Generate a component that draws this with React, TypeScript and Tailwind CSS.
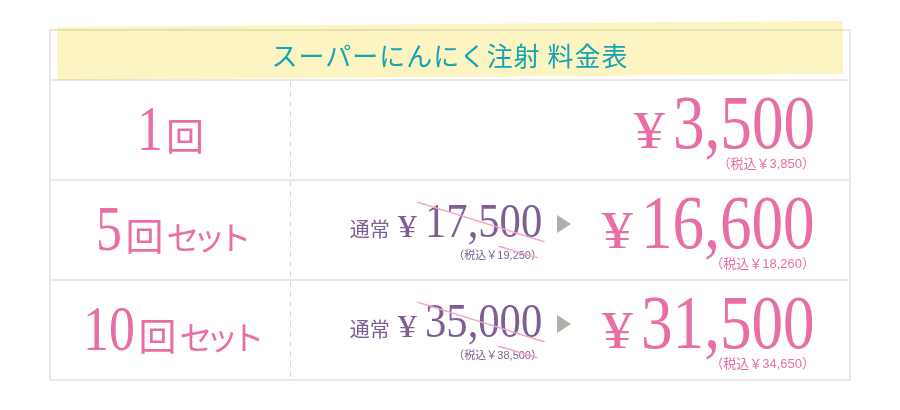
import React from "react";

const serif = "font-['Liberation_Serif','Noto_Sans_CJK_JP',serif]";
const sans = "font-['Noto_Sans_CJK_JP','Liberation_Sans',sans-serif]";
const small = "font-['Liberation_Sans','Noto_Sans_CJK_JP',sans-serif]";

function Strike({ className, w, h }: { className: string; w: number; h: number }) {
  return (
    <svg className={`pointer-events-none absolute ${className}`} width={w} height={h} viewBox={`0 0 ${w} ${h}`}>
      <line x1="0" y1="0" x2={w} y2={h} stroke="#f2a5c6" strokeWidth="1.5" />
    </svg>
  );
}

function Label({ num, squeeze, set }: { num: string; squeeze: string; set?: boolean }) {
  return (
    <div className="flex flex-1 items-baseline justify-center pt-[16px] text-[#e96ea5]">
      <span className={`inline-block origin-left scale-x-[0.81] text-[64px] leading-none ${serif} ${squeeze}`}>
        {num}
      </span>
      <span className={`ml-[3px] text-[38px] leading-none ${sans}`}>回</span>
      {set && <span className={`ml-[3px] text-[33px] leading-none tracking-[-7px] ${sans}`}>セット</span>}
    </div>
  );
}

function BigPrice({ amount, tax, squeeze }: { amount: string; tax: string; squeeze: string }) {
  return (
    <div className="flex w-[244px] flex-col items-end pt-[9px]">
      <div className={`flex items-baseline text-[#e96ea5] ${serif}`}>
        <span className="mr-[8px] inline-block origin-right scale-x-[1.2] text-[52px] leading-[40px]">¥</span>
        <span className={`inline-block origin-left scale-x-[0.82] text-[77px] leading-[65px] ${squeeze}`}>{amount}</span>
      </div>
      <div className={`mt-[2px] text-[13px] leading-[13px] text-[#e96ea5] ${small}`}>（税込￥{tax}）</div>
    </div>
  );
}

function Regular({ amount, tax }: { amount: string; tax: string }) {
  return (
    <div className="flex flex-col items-end pt-[18px] text-[#7d5f96]">
      <div className="relative flex items-baseline">
        <span className={`text-[20px] leading-none ${sans}`}>通常</span>
        <span className={`ml-[11px] mr-[8px] inline-block origin-right scale-x-[1.2] text-[32px] leading-[26px] ${serif}`}>
          ¥
        </span>
        <span className={`inline-block origin-left scale-x-[0.87] text-[49px] leading-[43px] -mr-[17.5px] ${serif}`}>
          {amount}
        </span>
        <Strike className="-right-[3px] top-[3px]" w={128} h={40} />
      </div>
      <div className={`relative mt-[8px] text-[11px] leading-[11px] ${small}`}>
        （税込￥{tax}）
        <Strike className="right-[4px] -top-[4px]" w={40} h={12} />
      </div>
    </div>
  );
}

function Arrow() {
  return (
    <div className="ml-[15px] mt-[34px] h-0 w-0 border-y-[9px] border-l-[14px] border-y-transparent border-l-[#b5aea8]" />
  );
}

function Row({ label, children }: { label: React.ReactNode; children: React.ReactNode }) {
  return (
    <div className="flex h-[100px] border-t-2 border-[#e9e9e9]">
      <div className="flex w-[239px]">{label}</div>
      <div className="w-px self-stretch bg-[repeating-linear-gradient(to_bottom,#d9d9d9_0_6px,transparent_6px_10px)]" />
      <div className="flex flex-1 items-start justify-end pr-[34px]">{children}</div>
    </div>
  );
}

export default function App() {
  return (
    <div className="h-[410px] w-[900px] bg-white pl-[49px] pt-[29px]">
      <div className="w-[802px] border-2 border-[#e9e9e9]">
        {/* 見出し */}
        <div className="relative flex h-[48px] items-center justify-center">
          <div className="absolute -top-[7px] bottom-[2px] left-[6px] right-[6px] -rotate-[0.44deg] bg-[#fcf5c3] mix-blend-multiply" />
          <span className={`relative text-[26px] leading-none tracking-[1px] text-[#16a3b3] ${sans}`}>
            スーパーにんにく注射 料金表
          </span>
        </div>

        <Row label={<Label num="1" squeeze="-mr-[6px]" />}>
          <BigPrice amount="3,500" tax="3,850" squeeze="-mr-[31px]" />
        </Row>

        <Row label={<Label num="5" squeeze="-mr-[6px]" set />}>
          <Regular amount="17,500" tax="19,250" />
          <Arrow />
          <BigPrice amount="16,600" tax="18,260" squeeze="-mr-[38px]" />
        </Row>

        <Row label={<Label num="10" squeeze="-mr-[12px]" set />}>
          <Regular amount="35,000" tax="38,500" />
          <Arrow />
          <BigPrice amount="31,500" tax="34,650" squeeze="-mr-[38px]" />
        </Row>
      </div>
    </div>
  );
}
